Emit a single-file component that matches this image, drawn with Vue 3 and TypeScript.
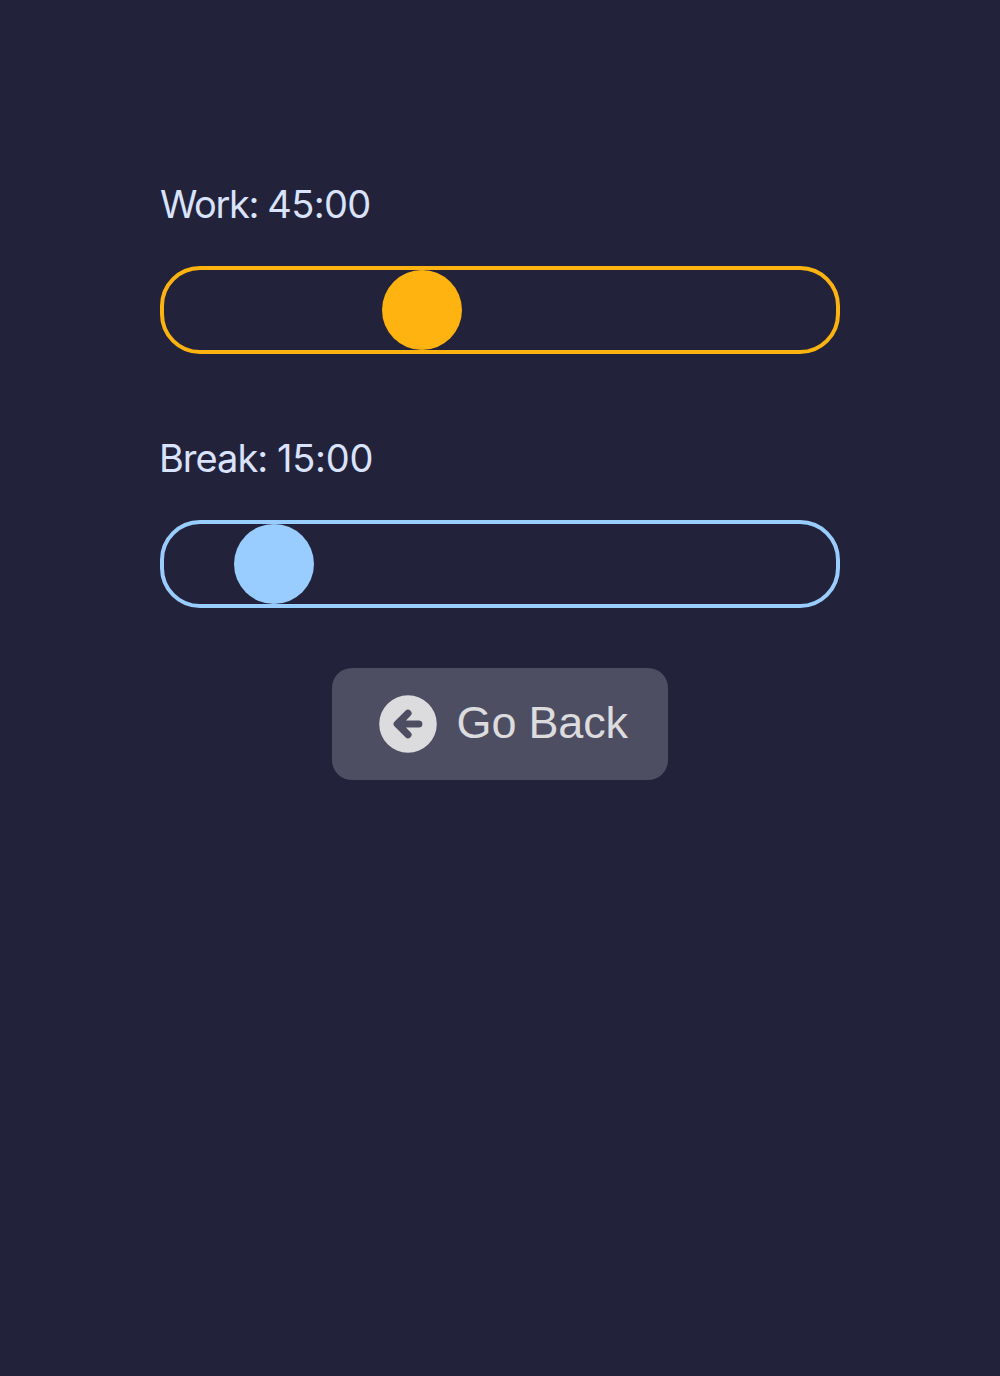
<script setup lang="ts">
import { ref } from 'vue'

const work = ref<number>(45)
const rest = ref<number>(15)

const format = (minutes: number): string => `${minutes}:00`
</script>

<template>
  <main class="settings">
    <label class="label label-work" for="work"><span class="name">Work: </span>{{ format(work) }}</label>
    <input id="work" v-model.number="work" class="slider work" type="range" min="1" max="120" />
    <label class="label label-break" for="break"><span class="name">Break: </span>{{ format(rest) }}</label>
    <input id="break" v-model.number="rest" class="slider break" type="range" min="1" max="120" />
    <button class="back" type="button">
      <svg class="icon" viewBox="0 0 20 20" fill="currentColor" aria-hidden="true">
        <path
          fill-rule="evenodd"
          clip-rule="evenodd"
          d="M10 18a8 8 0 100-16 8 8 0 000 16zm.707-10.293a1 1 0 00-1.414-1.414l-3 3a1 1 0 000 1.414l3 3a1 1 0 001.414-1.414L9.414 11H13a1 1 0 100-2H9.414l1.293-1.293z"
        />
      </svg>
      <span class="back-text">Go Back</span>
    </button>
  </main>
</template>

<style>
body {
  background: #22223a;
}
</style>

<style scoped>
.settings {
  box-sizing: border-box;
  width: 680px;
  min-height: 1376px;
  margin: 0 auto;
  padding-top: 179px;
  display: flex;
  flex-direction: column;
  align-items: flex-start;
}

.label {
  height: 50px;
  line-height: 50px;
  margin-bottom: 37px;
  color: #d9e3ff;
  font-family: Inter, "Liberation Sans", sans-serif;
  font-size: 38px;
  letter-spacing: -0.65px;
  white-space: pre;
}

.label-work .name {
  letter-spacing: -1.4px;
}

.label-break {
  margin-left: -1px;
  letter-spacing: -0.2px;
}

.label-break .name {
  letter-spacing: -1px;
}

.slider {
  -webkit-appearance: none;
  appearance: none;
  box-sizing: border-box;
  width: 680px;
  height: 88px;
  margin: 0 0 79px;
  border: 4px solid var(--accent);
  border-radius: 40px;
  background: transparent;
  outline: none;
}

.slider::-webkit-slider-thumb {
  -webkit-appearance: none;
  appearance: none;
  width: 80px;
  height: 80px;
  border-radius: 50%;
  background: var(--accent);
}

.work {
  --accent: #ffb310;
}

.work::-webkit-slider-thumb {
  transform: translateX(-1px);
}

.break {
  --accent: #99ccff;
  margin-bottom: 60px;
}

.back {
  box-sizing: border-box;
  align-self: center;
  width: 336px;
  height: 112px;
  padding: 0 0 0 40px;
  display: flex;
  align-items: center;
  gap: 12.6px;
  border: none;
  border-radius: 20px;
  background: #4e4e62;
  color: #dcdcdf;
  font-family: "Liberation Sans", Arial, sans-serif;
  font-size: 45px;
  letter-spacing: -0.2px;
  white-space: nowrap;
}

.back-text {
  padding-bottom: 2px;
}

.icon {
  width: 72px;
  height: 72px;
  flex: none;
}
</style>
